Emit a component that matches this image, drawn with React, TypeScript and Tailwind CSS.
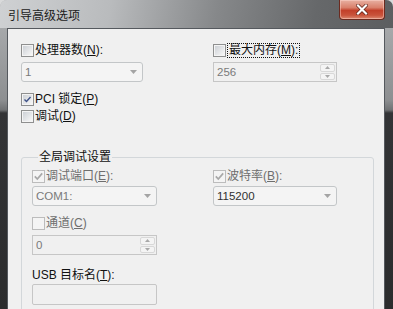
import React from "react";

type CheckProps = { checked?: boolean; disabled?: boolean };

const Check: React.FC<CheckProps> = ({ checked, disabled }) => {
  return (
    <span
      className={
        disabled
          ? "flex h-[13px] w-[13px] shrink-0 items-center justify-center border border-[#bcbcbc] bg-[#f4f4f4]"
          : "flex h-[13px] w-[13px] shrink-0 items-center justify-center border border-[#8e8f8f] bg-[#f4f4f4] p-[1px]"
      }
    >
      <span
        className={
          disabled
            ? "flex h-full w-full items-center justify-center"
            : "flex h-full w-full items-center justify-center bg-[linear-gradient(135deg,#cdd1d6,#f7f7f7)]"
        }
      >
        {checked && (
          <svg width="11" height="11" viewBox="0 0 11 11">
            <path
              d="M1.8 5.4 L4.3 8 L9.2 2.4"
              fill="none"
              stroke={disabled ? "#a8a8a8" : "#3f5288"}
              strokeWidth="1.7"
            />
          </svg>
        )}
      </span>
    </span>
  );
};

// mnemonic letter, underlined like the win32 label
const Key: React.FC<{ k: string }> = ({ k }) => (
  <>
    (<span className="underline underline-offset-[1px]">{k}</span>)
  </>
);

const Combo: React.FC<{ value: string; dark?: boolean; width: string }> = ({ value, dark, width }) => {
  return (
    <div
      className={`flex h-[20px] items-center justify-between rounded-[3px] border border-[#c3c6c8] bg-[#f4f4f4] pl-[3px] pr-[5px] ${width}`}
    >
      <span
        className={
          dark
            ? "text-[11.5px] leading-[14px] text-[#303030] font-['Liberation_Sans',sans-serif]"
            : "text-[11.5px] leading-[14px] text-[#7a7a7a] font-['Liberation_Sans',sans-serif]"
        }
      >
        {value}
      </span>
      <svg width="7" height="4" viewBox="0 0 7 4">
        <path d="M0 0H7L3.5 4Z" fill="#a4a4a4" />
      </svg>
    </div>
  );
};

const Spin: React.FC<{ value: string; width: string }> = ({ value, width }) => {
  return (
    <div className={`flex h-[20px] items-stretch border border-[#c6c6c6] bg-[#f0f0f0] ${width}`}>
      <span className="flex flex-1 items-center pl-[3px] text-[11.5px] leading-[14px] text-[#7a7a7a] font-['Liberation_Sans',sans-serif]">
        {value}
      </span>
      <div className="flex w-[17px] flex-col gap-[1px] p-[1px]">
        <div className="flex flex-1 items-center justify-center rounded-[2px] border border-[#d8d8d8] bg-[#f4f4f4]">
          <svg width="5" height="3" viewBox="0 0 5 3">
            <path d="M0 3H5L2.5 0Z" fill="#a8a8a8" />
          </svg>
        </div>
        <div className="flex flex-1 items-center justify-center rounded-[2px] border border-[#d8d8d8] bg-[#f4f4f4]">
          <svg width="5" height="3" viewBox="0 0 5 3">
            <path d="M0 0H5L2.5 3Z" fill="#a8a8a8" />
          </svg>
        </div>
      </div>
    </div>
  );
};

const CloseButton: React.FC = () => (
  <div className="flex h-[20px] w-[46px] items-center justify-center rounded-b-[4px] border border-t-0 border-[#6b2a1f] bg-[linear-gradient(to_bottom,#e8b0a2_0%,#d9806b_40%,#c2402a_55%,#c9533b_80%,#dc8a72_100%)] shadow-[inset_0_0_0_1px_rgba(255,220,210,0.45)]">
    <svg width="12" height="11" viewBox="0 0 12 11">
      <path d="M2 1.5 L10 9.5 M10 1.5 L2 9.5" stroke="#5a1e14" strokeWidth="3.6" strokeLinecap="square" />
      <path d="M2 1.5 L10 9.5 M10 1.5 L2 9.5" stroke="#ffffff" strokeWidth="2.2" strokeLinecap="square" />
    </svg>
  </div>
);

const App: React.FC = () => {
  return (
    <div className="h-[309px] w-[393px] overflow-hidden bg-[#d9dadb]">
      <div className="flex h-full flex-col rounded-t-[7px] bg-[linear-gradient(to_bottom,#b0b2b4_0px,#8d8f91_100px,#707274_110px,#333436_113px,#2b2c2d_100%)]">
        {/* title bar */}
        <div className="flex h-[28px] shrink-0 items-start justify-between rounded-t-[7px] bg-[linear-gradient(100deg,#cfd1d3_0%,#b9bbbd_28%,#86888a_55%,#66686a_80%,#5c5e60_100%)] pl-[8px] pr-[8px]">
          <span className="mt-[8px] text-[12px] leading-[14px] text-[#1b1b1b] font-['Noto_Sans_CJK_SC',sans-serif]">
            引导高级选项
          </span>
          <CloseButton />
        </div>

        {/* client area */}
        <div className="ml-[7px] mr-[8px] flex-1 border border-b-0 border-[#55595e] bg-[#f0f0f0] text-[12px] leading-[13px] text-[#111] font-['Liberation_Sans','Noto_Sans_CJK_SC',sans-serif]">
          <div className="pl-[13px] pt-[15px]">
            <div className="flex h-[13px] items-center">
              <div className="flex w-[192px] items-center gap-[1px]">
                <Check />
                <span>
                  处理器数<Key k="N" />:
                </span>
              </div>
              <div className="flex items-center gap-[1px]">
                <Check />
                <span className="border border-dotted border-[#111] px-[1px] leading-[13px]">
                  最大内存<Key k="M" />:
                </span>
              </div>
            </div>

            <div className="mt-[5px] flex">
              <div className="w-[192px]">
                <Combo value="1" width="w-[122px]" />
              </div>
              <Spin value="256" width="w-[124px]" />
            </div>

            <div className="mt-[11px] flex h-[13px] items-center gap-[1px]">
              <Check checked />
              <span>
                PCI 锁定<Key k="P" />
              </span>
            </div>
            <div className="mt-[4px] flex h-[13px] items-center gap-[1px]">
              <Check />
              <span>
                调试<Key k="D" />
              </span>
            </div>
          </div>

          <fieldset className="ml-[13px] mr-[10px] mt-[27px] rounded-[3px] border border-[#d3d7da] pb-[10px] pl-[10px] pt-[6px]">
            <legend className="ml-[6px] px-[1px] leading-[14px] text-[#111]">全局调试设置</legend>

            <div className="flex h-[13px] items-center text-[#6e6e6e]">
              <div className="flex w-[181px] items-center gap-[1px]">
                <Check checked disabled />
                <span>
                  调试端口<Key k="E" />:
                </span>
              </div>
              <div className="flex items-center gap-[1px]">
                <Check checked disabled />
                <span>
                  波特率<Key k="B" />:
                </span>
              </div>
            </div>

            <div className="mt-[3px] flex">
              <div className="w-[181px]">
                <Combo value="COM1:" width="w-[125px]" />
              </div>
              <Combo value="115200" dark width="w-[124px]" />
            </div>

            <div className="mt-[11px] flex h-[13px] items-center gap-[1px] text-[#6e6e6e]">
              <Check disabled />
              <span>
                通道<Key k="C" />
              </span>
            </div>

            <div className="mt-[5px]">
              <Spin value="0" width="w-[125px]" />
            </div>

            <div className="mt-[13px] leading-[14px]">
              USB 目标名<Key k="T" />:
            </div>
            <div className="mt-[2px] h-[21px] w-[125px] rounded-[2px] border border-[#c6c6c6] bg-[#f0f0f0]" />
          </fieldset>
        </div>
      </div>
    </div>
  );
};

export default App;
